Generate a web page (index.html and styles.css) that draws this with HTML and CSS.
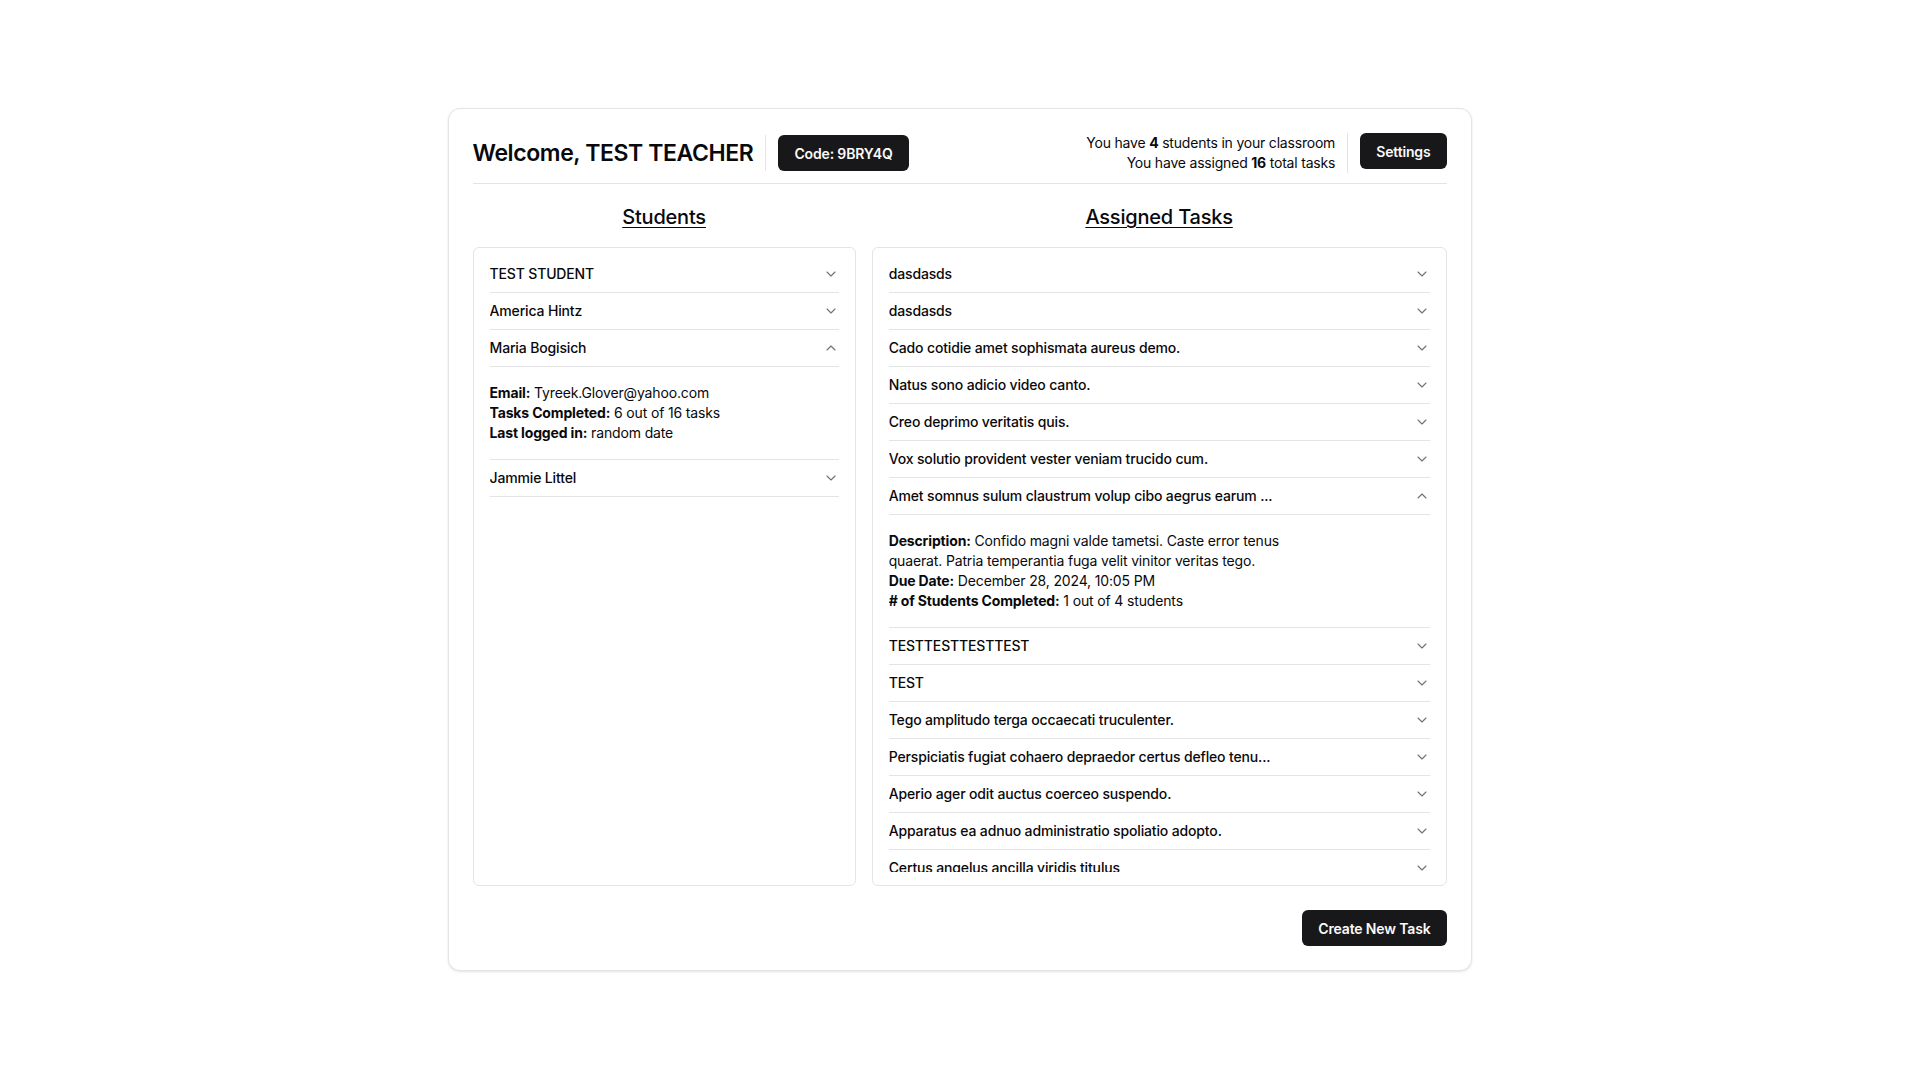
FILE: index.html
```html
<!DOCTYPE html>
<html lang="en">
<head>
<meta charset="utf-8">
<title>Teacher Dashboard</title>
<link rel="stylesheet" href="styles.css">
</head>
<body>
<main class="card">
  <header class="header">
    <div class="header-left">
      <h1 class="title">Welcome, TEST TEACHER</h1>
      <span class="vdivider short"></span>
      <button class="btn">Code: 9BRY4Q</button>
    </div>
    <div class="header-right">
      <div class="stats">
        <div>You have <b>4</b> students in your classroom</div>
        <div>You have assigned <b>16</b> total tasks</div>
      </div>
      <span class="vdivider tall"></span>
      <button class="btn btn-top">Settings</button>
    </div>
  </header>

  <div class="columns">
    <section class="column">
      <h2 class="col-title">Students</h2>
      <div class="panel">
        <div class="scroll">
          <div class="row"><span>TEST STUDENT</span><svg class="chev" viewBox="0 0 24 24"><path d="m6 9 6 6 6-6"/></svg></div>
          <div class="row"><span>America Hintz</span><svg class="chev" viewBox="0 0 24 24"><path d="m6 9 6 6 6-6"/></svg></div>
          <div class="row"><span>Maria Bogisich</span><svg class="chev" viewBox="0 0 24 24"><path d="m18 15-6-6-6 6"/></svg></div>
          <div class="detail">
            <div><b>Email:</b> Tyreek.Glover@yahoo.com</div>
            <div><b>Tasks Completed:</b> 6 out of 16 tasks</div>
            <div><b>Last logged in:</b> random date</div>
          </div>
          <div class="row"><span>Jammie Littel</span><svg class="chev" viewBox="0 0 24 24"><path d="m6 9 6 6 6-6"/></svg></div>
        </div>
      </div>
    </section>

    <section class="column">
      <h2 class="col-title">Assigned Tasks</h2>
      <div class="panel">
        <div class="scroll">
          <div class="row"><span>dasdasds</span><svg class="chev" viewBox="0 0 24 24"><path d="m6 9 6 6 6-6"/></svg></div>
          <div class="row"><span>dasdasds</span><svg class="chev" viewBox="0 0 24 24"><path d="m6 9 6 6 6-6"/></svg></div>
          <div class="row"><span>Cado cotidie amet sophismata aureus demo.</span><svg class="chev" viewBox="0 0 24 24"><path d="m6 9 6 6 6-6"/></svg></div>
          <div class="row"><span>Natus sono adicio video canto.</span><svg class="chev" viewBox="0 0 24 24"><path d="m6 9 6 6 6-6"/></svg></div>
          <div class="row"><span>Creo deprimo veritatis quis.</span><svg class="chev" viewBox="0 0 24 24"><path d="m6 9 6 6 6-6"/></svg></div>
          <div class="row"><span>Vox solutio provident vester veniam trucido cum.</span><svg class="chev" viewBox="0 0 24 24"><path d="m6 9 6 6 6-6"/></svg></div>
          <div class="row"><span>Amet somnus sulum claustrum volup cibo aegrus earum ...</span><svg class="chev" viewBox="0 0 24 24"><path d="m18 15-6-6-6 6"/></svg></div>
          <div class="detail">
            <div class="desc"><b>Description:</b> Confido magni valde tametsi. Caste error tenus quaerat. Patria temperantia fuga velit vinitor veritas tego.</div>
            <div><b>Due Date:</b> December 28, 2024, 10:05 PM</div>
            <div><b># of Students Completed:</b> 1 out of 4 students</div>
          </div>
          <div class="row"><span>TESTTESTTESTTEST</span><svg class="chev" viewBox="0 0 24 24"><path d="m6 9 6 6 6-6"/></svg></div>
          <div class="row"><span>TEST</span><svg class="chev" viewBox="0 0 24 24"><path d="m6 9 6 6 6-6"/></svg></div>
          <div class="row"><span>Tego amplitudo terga occaecati truculenter.</span><svg class="chev" viewBox="0 0 24 24"><path d="m6 9 6 6 6-6"/></svg></div>
          <div class="row"><span>Perspiciatis fugiat cohaero depraedor certus defleo tenu...</span><svg class="chev" viewBox="0 0 24 24"><path d="m6 9 6 6 6-6"/></svg></div>
          <div class="row"><span>Aperio ager odit auctus coerceo suspendo.</span><svg class="chev" viewBox="0 0 24 24"><path d="m6 9 6 6 6-6"/></svg></div>
          <div class="row"><span>Apparatus ea adnuo administratio spoliatio adopto.</span><svg class="chev" viewBox="0 0 24 24"><path d="m6 9 6 6 6-6"/></svg></div>
          <div class="row"><span>Certus angelus ancilla viridis titulus</span><svg class="chev" viewBox="0 0 24 24"><path d="m6 9 6 6 6-6"/></svg></div>
        </div>
      </div>
    </section>
  </div>

  <footer class="footer">
    <button class="btn">Create New Task</button>
  </footer>
</main>
</body>
</html>
```

FILE: styles.css
```css
* { box-sizing: border-box; }

html, body { margin: 0; padding: 0; }

body {
  min-height: 100vh;
  display: flex;
  align-items: center;
  justify-content: center;
  background: #ffffff;
  color: #09090b;
  font-family: Inter, "Noto Sans", "Liberation Sans", sans-serif;
  font-size: 14px;
  line-height: 20px;
  letter-spacing: -0.15px;
}

.card {
  width: 1024px;
  border: 1px solid #e4e4e7;
  border-radius: 12px;
  box-shadow: 0 1px 3px rgba(0,0,0,0.08), 0 1px 2px rgba(0,0,0,0.04);
  padding: 24px;
  background: #fff;
}

.header {
  display: flex;
  justify-content: space-between;
  align-items: center;
  padding-bottom: 10px;
  border-bottom: 1px solid #e4e4e7;
}

.header-left, .header-right {
  display: flex;
  align-items: center;
  gap: 12px;
}

.title {
  margin: 0;
  font-size: 23px;
  line-height: 32px;
  font-weight: 600;
  letter-spacing: -0.4px;
}

.vdivider {
  width: 1px;
  background: #e4e4e7;
}
.vdivider.short { height: 36px; }
.vdivider.tall { height: 40px; }

.btn {
  height: 36px;
  padding: 0 16px;
  border: none;
  border-radius: 6px;
  background: #18181b;
  color: #fafafa;
  font-family: inherit;
  font-size: 14px;
  font-weight: 600;
  letter-spacing: -0.15px;
}
.btn-top { align-self: flex-start; }

.stats {
  text-align: right;
  font-size: 14px;
  line-height: 20px;
  letter-spacing: -0.2px;
}
.stats b { font-weight: 700; }

.columns {
  display: grid;
  grid-template-columns: 2fr 3fr;
  gap: 16px;
}

.column { min-width: 0; }

.col-title {
  margin: 19px 0 16px;
  text-align: center;
  font-size: 20px;
  line-height: 28px;
  font-weight: 500;
  letter-spacing: -0.2px;
  text-decoration: underline;
  text-underline-offset: 3px;
  text-decoration-thickness: 1px;
}

.panel {
  height: 639px;
  border: 1px solid #e4e4e7;
  border-radius: 6px;
  padding: 8px 16px 13px;
}

.scroll {
  height: 100%;
  overflow: hidden;
}

.row {
  display: flex;
  justify-content: space-between;
  align-items: center;
  height: 37px;
  border-bottom: 1px solid #e4e4e7;
  font-weight: 500;
}

.chev {
  width: 16px;
  height: 16px;
  flex: none;
  fill: none;
  stroke: #71717a;
  stroke-width: 1.6;
  stroke-linecap: round;
  stroke-linejoin: round;
}

.detail {
  padding: 16px 0;
  border-bottom: 1px solid #e4e4e7;
}
.detail b { font-weight: 700; }
.detail .desc { max-width: 440px; }

.footer {
  display: flex;
  justify-content: flex-end;
  margin-top: 24px;
}
```
